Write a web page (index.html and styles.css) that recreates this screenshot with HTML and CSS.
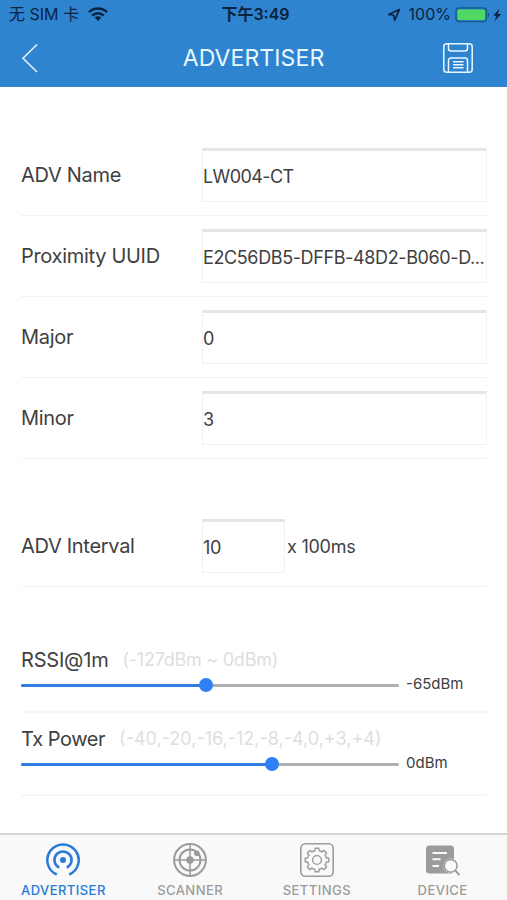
FILE: index.html
```html
<!DOCTYPE html>
<html lang="en">
  <head>
    <meta charset="UTF-8" />
    <meta name="viewport" content="width=device-width, initial-scale=1.0" />
    <title>Advertiser</title>
    <link rel="stylesheet" href="styles.css">
  </head>
  <body>
    <header>
      <div class="status-bar">
        <div class="carrier">
          <span>无 SIM 卡</span>
          <svg class="wifi" viewBox="0 0 20 15" width="20" height="15">
            <path d="M1 5.2a13 13 0 0 1 18 0M4.2 8.6a8.3 8.3 0 0 1 11.6 0" fill="none" stroke="currentColor" stroke-width="2.5" />
            <path d="M10 14l3.3-3.4a4.7 4.7 0 0 0-6.6 0z" fill="currentColor" />
          </svg>
        </div>
        <div class="time">下午3:49</div>
        <div class="power">
          <svg class="location" viewBox="0 0 14 14" width="14" height="14">
            <path d="M12.4 1.6L1.6 6.5l5.2.7.8 5.2z" fill="none" stroke="currentColor" stroke-width="1.6" stroke-linejoin="round" />
          </svg>
          <span class="percent">100%</span>
          <svg class="battery" viewBox="0 0 47 16" width="47" height="16">
            <rect x="1" y="1" width="30.5" height="13.5" rx="3" fill="none" stroke="#155d8c" stroke-width="1.4" />
            <rect x="2.5" y="2.6" width="27.5" height="10.4" rx="1.5" fill="#4fd964" />
            <path d="M33 5.2q3 2.6 0 5.2z" fill="#155d8c" />
            <path d="M44.5 1.5l-6.3 7.2h3.3l-2 5.6 6.6-7.3h-3.4z" fill="currentColor" />
          </svg>
        </div>
      </div>
      <nav>
        <svg class="back" viewBox="0 0 18 30" width="18" height="30">
          <path d="M16 1.5L2 15.2 16 29" fill="none" stroke="currentColor" stroke-width="1.5" />
        </svg>
        <h1>ADVERTISER</h1>
        <svg class="save" viewBox="0 0 30 30" width="30" height="30" fill="none" stroke="currentColor" stroke-width="1.5">
          <rect x=".8" y=".8" width="28.4" height="28.4" rx="3" />
          <path d="M5.5 1v4.5a2.5 2.5 0 0 0 2.5 2.5h14a2.5 2.5 0 0 0 2.5-2.5V1M5.5 29V17.5a2.5 2.5 0 0 1 2.5-2.5h14a2.5 2.5 0 0 1 2.5 2.5V29M10 18.8h10.5M10 21.8h10.5M10 24.8h10.5" />
        </svg>
      </nav>
    </header>

    <main>
      <section class="info">
        <div class="row">
          <label>ADV Name</label>
          <div class="field name">LW004-CT</div>
        </div>
        <div class="row">
          <label>Proximity UUID</label>
          <div class="field">E2C56DB5-DFFB-48D2-B060-D...</div>
        </div>
        <div class="row">
          <label>Major</label>
          <div class="field">0</div>
        </div>
        <div class="row">
          <label>Minor</label>
          <div class="field">3</div>
        </div>
      </section>

      <section class="interval">
        <div class="row">
          <label>ADV Interval</label>
          <div class="field small">10</div>
          <span class="unit">x 100ms</span>
        </div>
      </section>

      <section class="levels">
        <div class="level rssi">
          <div class="level-head">
            <label>RSSI@1m</label>
            <span class="hint">(-127dBm ~ 0dBm)</span>
          </div>
          <div class="level-body">
            <div class="track">
              <div class="fill" style="width: 49%"></div>
              <div class="thumb" style="left: 49%"></div>
            </div>
            <span class="value">-65dBm</span>
          </div>
        </div>
        <div class="level tx">
          <div class="level-head">
            <label>Tx Power</label>
            <span class="hint">(-40,-20,-16,-12,-8,-4,0,+3,+4)</span>
          </div>
          <div class="level-body">
            <div class="track">
              <div class="fill" style="width: 66.5%"></div>
              <div class="thumb" style="left: 66.5%"></div>
            </div>
            <span class="value">0dBm</span>
          </div>
        </div>
      </section>
    </main>

    <footer>
      <div class="tab active">
        <svg viewBox="0 0 36 36" width="36" height="36">
          <g fill="none" stroke="currentColor" stroke-width="2.5">
            <path d="M11.8 32.5a15.7 15.7 0 1 1 12.4 0" />
            <path d="M14.2 25.7a8.6 8.6 0 1 1 7.6 0" />
          </g>
          <circle cx="18" cy="18" r="3" fill="currentColor" />
        </svg>
        <span>ADVERTISER</span>
      </div>
      <div class="tab">
        <svg viewBox="0 0 36 36" width="36" height="36">
          <g fill="none" stroke="currentColor">
            <circle cx="18" cy="18" r="15.9" stroke-width="2" />
            <circle cx="18" cy="18" r="10.5" stroke-width="2" />
            <path d="M18 2v32M2 18h32" stroke-width="1.5" />
          </g>
          <circle cx="18" cy="18" r="3.7" fill="currentColor" />
          <circle cx="24.8" cy="11.2" r="2.8" fill="currentColor" />
        </svg>
        <span>SCANNER</span>
      </div>
      <div class="tab">
        <svg viewBox="0 0 36 36" width="36" height="36" fill="none" stroke="currentColor">
          <rect x="1.8" y="1.8" width="32.4" height="32.4" rx="4.5" stroke-width="1.6" />
          <g transform="translate(18 18)" stroke-width="1.4" stroke-linecap="round" stroke-linejoin="round">
            <circle r="4.4" />
            <path id="tooth" d="M-2.3-9.3L-1.7-11.8H1.7L2.3-9.3Q3.8-9 4.95-8.2" />
            <use href="#tooth" transform="rotate(45)" />
            <use href="#tooth" transform="rotate(90)" />
            <use href="#tooth" transform="rotate(135)" />
            <use href="#tooth" transform="rotate(180)" />
            <use href="#tooth" transform="rotate(225)" />
            <use href="#tooth" transform="rotate(270)" />
            <use href="#tooth" transform="rotate(315)" />
          </g>
        </svg>
        <span>SETTINGS</span>
      </div>
      <div class="tab device">
        <svg viewBox="0 0 36 36" width="36" height="36">
          <rect x="1" y="3.5" width="28" height="28" rx="3.5" fill="currentColor" />
          <path d="M7.5 10.9H22M7.5 17.3h8M7.5 23.9h6.5" stroke="#f9f9f9" stroke-width="2" />
          <circle cx="25.7" cy="23.8" r="7.2" fill="#f9f9f9" />
          <circle cx="25.7" cy="23.8" r="6.4" fill="none" stroke="currentColor" stroke-width="1.5" />
          <path d="M30 28.2l4.4 4.8" stroke="currentColor" stroke-width="1.9" />
        </svg>
        <span>DEVICE</span>
      </div>
    </footer>
  </body>
</html>
```
FILE: styles.css
```css
* {
  margin: 0;
  padding: 0;
  box-sizing: border-box;
}

body {
  font-family: Inter, 'Noto Sans CJK SC', sans-serif;
  background-color: #fff;
  color: #404040;
  width: 507px;
  height: 900px;
  display: flex;
  flex-direction: column;
  overflow: hidden;
}

header {
  height: 87px;
  background-color: #2f84d0;
}

.status-bar {
  height: 29px;
  padding: 0 5px 0 9px;
  display: grid;
  grid-template-columns: 1fr auto 1fr;
  align-items: center;
  color: #0a2340;
  font-size: 16px;
  line-height: 29px;
}

.carrier {
  display: flex;
  align-items: center;
  gap: 9px;
}

.time {
  font-weight: 600;
}

.power {
  display: flex;
  align-items: center;
  justify-content: flex-end;
}

.percent {
  margin: 0 4px 0 8px;
}

nav {
  height: 57px;
  padding: 0 34px 0 21px;
  display: grid;
  grid-template-columns: 30px 1fr 30px;
  align-items: center;
  color: #e8f8ff;

  & h1 {
    padding-left: 13px;
    font-size: 23px;
    font-weight: 400;
    text-align: center;
    letter-spacing: 0.1px;
  }
}

main {
  flex: 1;
  padding: 48px 20px 0 21px;
}

.row {
  height: 81px;
  display: flex;
  align-items: center;
  border-bottom: 1px solid #f1f1f1;

  & label {
    width: 181px;
  }
}

label {
  font-size: 20px;
  letter-spacing: -0.3px;
  white-space: nowrap;
}

.field {
  flex: 1;
  min-width: 0;
  height: 54px;
  border: 1px solid #f1f1f1;
  border-top: 3px solid #e5e5e5;
  font-size: 18px;
  letter-spacing: -0.38px;
  line-height: 52px;
  white-space: nowrap;

  &.name {
    letter-spacing: -0.6px;
  }

  &.small {
    flex: none;
    width: 83px;
  }
}

.unit {
  margin-left: 2px;
  font-size: 18px;
  letter-spacing: -0.25px;
}

.interval {
  margin-top: 47px;
}

.levels {
  margin-top: 59px;
}

.level {
  border-bottom: 2px solid #f6f6f6;

  & label {
    letter-spacing: -0.2px;
  }
}

.rssi {
  height: 67px;

  & .hint {
    letter-spacing: -0.25px;
  }
}

.tx {
  height: 83px;
  padding-top: 12px;

  & label {
    letter-spacing: -0.45px;
  }
}

.level-head {
  height: 27px;
  display: flex;
  align-items: center;
}

.hint {
  margin-left: 14px;
  font-size: 18px;
  color: #dedede;
}

.level-body {
  height: 24px;
  display: flex;
  align-items: center;
}

.track {
  position: relative;
  width: 378px;
  height: 3px;
  border-radius: 2px;
  background-color: #b0b0b0;
}

.fill {
  height: 100%;
  border-radius: 2px;
  background-color: #2f7de0;
}

.thumb {
  position: absolute;
  top: 50%;
  width: 14px;
  height: 14px;
  border-radius: 50%;
  background-color: #2f80f6;
  transform: translate(-50%, -50%);
}

.value {
  margin-left: 7px;
  padding-bottom: 3px;
  font-size: 15px;
}

footer {
  height: 67px;
  display: grid;
  grid-template-columns: repeat(4, 1fr);
  border-top: 2px solid #d5d5d5;
  background-color: #f9f9f9;
}

.tab {
  padding-top: 7px;
  display: flex;
  flex-direction: column;
  align-items: center;
  color: #9b9b9b;
  font-size: 13px;
  font-weight: 500;
  letter-spacing: 0.45px;

  & span {
    margin-top: 3px;
    line-height: 18px;
  }

  &.active {
    color: #2a7ad8;
  }

  &.device {
    padding-right: 2px;
  }
}
```
